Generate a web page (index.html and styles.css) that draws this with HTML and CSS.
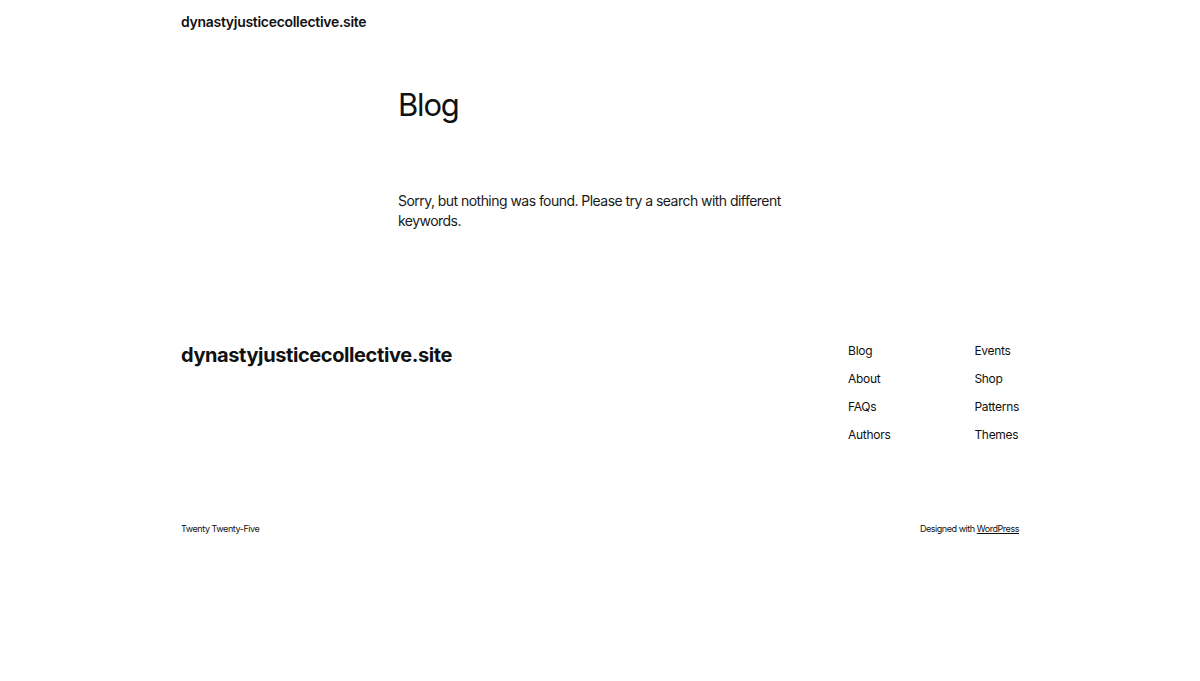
FILE: index.html
```html
<!DOCTYPE html>
<html lang="en">
<head>
<meta charset="utf-8">
<title>Blog – dynastyjusticecollective.site</title>
<link rel="stylesheet" href="styles.css">
</head>
<body>
<div class="site">
  <header class="site-header">
    <a class="header-title" href="#">dynastyjusticecollective.site</a>
  </header>
  <main class="main">
    <h1 class="page-title">Blog</h1>
    <p class="no-results">Sorry, but nothing was found. Please try a search with different keywords.</p>
  </main>
  <footer class="site-footer">
    <div class="footer-top">
      <a class="footer-title" href="#">dynastyjusticecollective.site</a>
      <nav class="footer-nav">
        <ul class="nav-col">
          <li><a href="#">Blog</a></li>
          <li><a href="#">About</a></li>
          <li><a href="#">FAQs</a></li>
          <li><a href="#">Authors</a></li>
        </ul>
        <ul class="nav-col">
          <li><a href="#">Events</a></li>
          <li><a href="#">Shop</a></li>
          <li><a href="#">Patterns</a></li>
          <li><a href="#">Themes</a></li>
        </ul>
      </nav>
    </div>
    <div class="footer-bottom">
      <span>Twenty Twenty-Five</span>
      <span>Designed with <a class="wp-link" href="#">WordPress</a></span>
    </div>
  </footer>
</div>
</body>
</html>
```

FILE: styles.css
```css
* { box-sizing: border-box; }
html, body { margin: 0; padding: 0; background: #ffffff; }
body {
  font-family: Inter, "Noto Sans", sans-serif;
  color: #111111;
}
a { color: inherit; text-decoration: none; }
.site {
  width: 838px;
  margin: 0 auto;
}
.site-header {
  height: 42px;
  display: flex;
  align-items: center;
}
.header-title {
  font-size: 14px;
  font-weight: 600;
  letter-spacing: -0.3px;
}
.main {
  width: 404px;
  margin: 0 auto;
  padding-top: 44px;
}
.page-title {
  margin: 0;
  font-size: 31px;
  font-weight: 400;
  letter-spacing: -1.2px;
  line-height: 38px;
}
.no-results {
  margin: 67px 0 0 0;
  font-size: 14px;
  line-height: 20px;
  letter-spacing: -0.54px;
  color: #1a1a1a;
}
.site-footer {
  margin-top: 110px;
}
.footer-top {
  display: flex;
  justify-content: space-between;
  align-items: flex-start;
}
.footer-title {
  font-size: 20px;
  font-weight: 700;
  letter-spacing: -0.4px;
  line-height: 28px;
}
.footer-nav {
  display: flex;
  gap: 84px;
}
.nav-col {
  list-style: none;
  margin: 0;
  padding: 0;
  display: flex;
  flex-direction: column;
  gap: 8px;
}
.nav-col li {
  font-size: 12px;
  line-height: 20px;
  letter-spacing: -0.3px;
}
.footer-bottom {
  margin-top: 76px;
  display: flex;
  justify-content: space-between;
  font-size: 9px;
  letter-spacing: -0.45px;
  line-height: 16px;
}
.wp-link { text-decoration: underline; }
```
